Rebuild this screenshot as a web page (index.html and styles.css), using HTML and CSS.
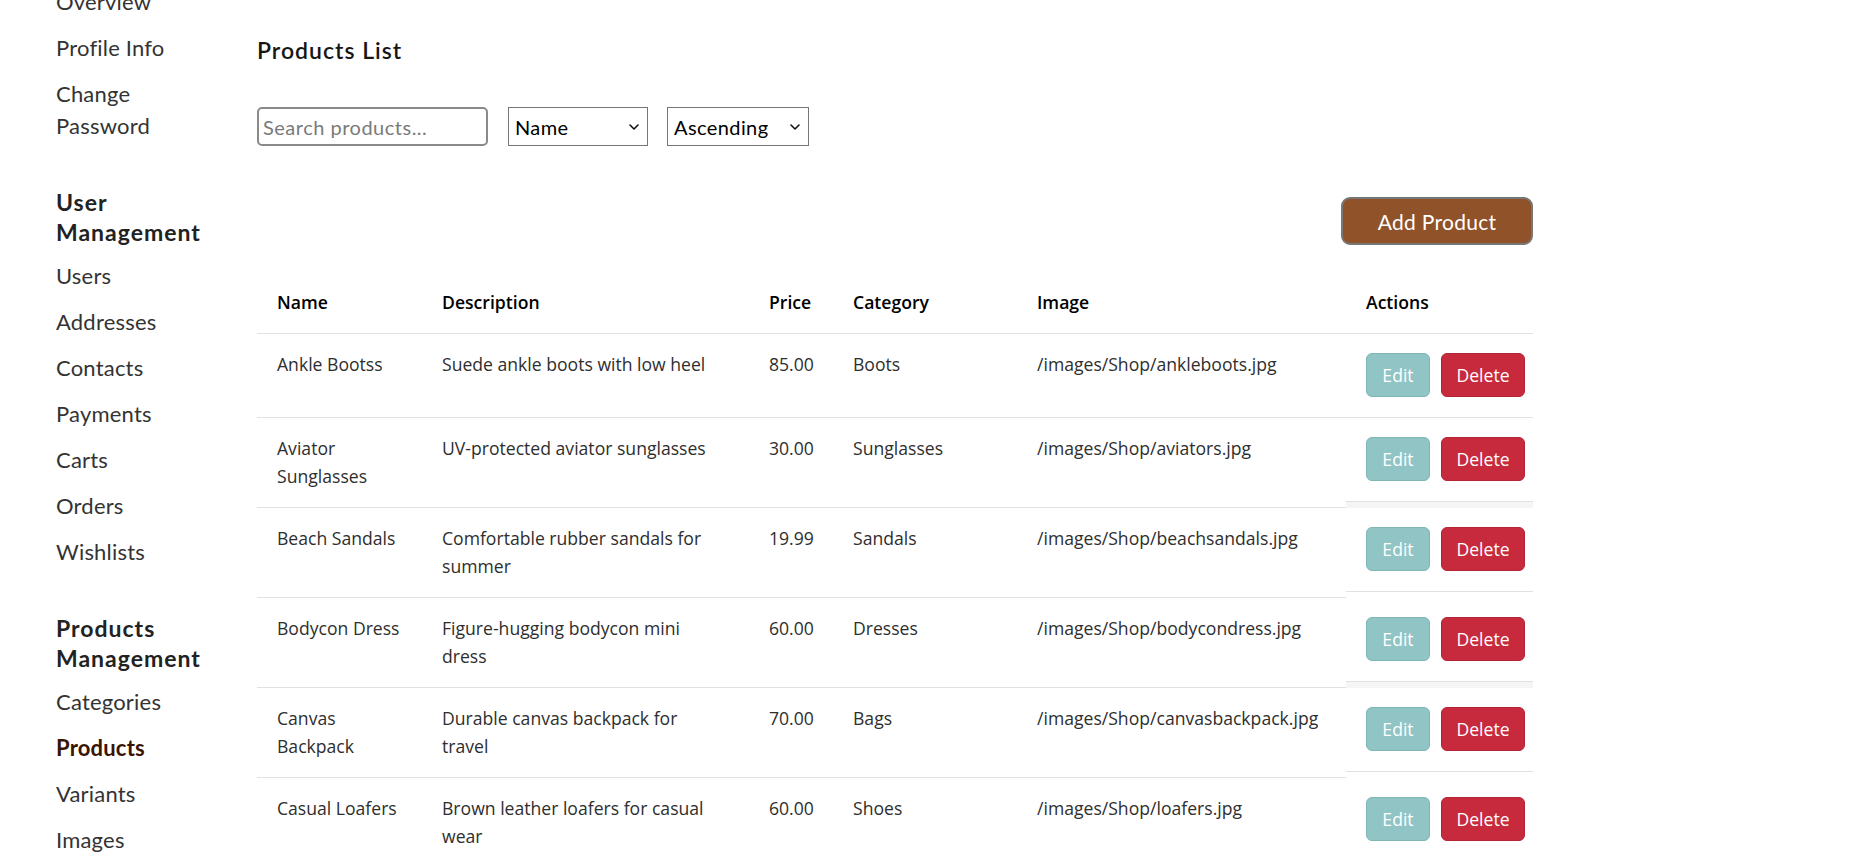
FILE: index.html
```html
<!DOCTYPE html>
<html lang="en">
<head>
<meta charset="utf-8">
<title>Products List</title>
<link rel="stylesheet" href="styles.css">
</head>
<body>
<div class="layout">
  <aside class="sidebar">
    <nav class="nav-group first">
      <a class="nav-link" href="#">Overview</a>
      <a class="nav-link" href="#">Profile Info</a>
      <a class="nav-link" href="#">Change Password</a>
    </nav>
    <h3 class="nav-heading">User Management</h3>
    <nav class="nav-group">
      <a class="nav-link" href="#">Users</a>
      <a class="nav-link" href="#">Addresses</a>
      <a class="nav-link" href="#">Contacts</a>
      <a class="nav-link" href="#">Payments</a>
      <a class="nav-link" href="#">Carts</a>
      <a class="nav-link" href="#">Orders</a>
      <a class="nav-link" href="#">Wishlists</a>
    </nav>
    <h3 class="nav-heading">Products Management</h3>
    <nav class="nav-group">
      <a class="nav-link" href="#">Categories</a>
      <a class="nav-link active" href="#">Products</a>
      <a class="nav-link" href="#">Variants</a>
      <a class="nav-link" href="#">Images</a>
    </nav>
  </aside>

  <main class="main">
    <h2 class="page-title">Products List</h2>

    <div class="filters">
      <input class="search" type="text" placeholder="Search products...">
      <div class="select-wrap name-select">
        <select class="select"><option>Name</option><option>Price</option></select>
        <svg class="chevron" viewBox="0 0 10 6" width="10" height="6"><path d="M1 1l4 4 4-4" fill="none" stroke="#111" stroke-width="1.6" stroke-linecap="round" stroke-linejoin="round"/></svg>
      </div>
      <div class="select-wrap order-select">
        <select class="select"><option>Ascending</option><option>Descending</option></select>
        <svg class="chevron" viewBox="0 0 10 6" width="10" height="6"><path d="M1 1l4 4 4-4" fill="none" stroke="#111" stroke-width="1.6" stroke-linecap="round" stroke-linejoin="round"/></svg>
      </div>
    </div>

    <div class="toolbar">
      <button class="btn-add" type="button">Add Product</button>
    </div>

    <table class="products">
      <colgroup>
        <col class="c-name"><col class="c-desc"><col class="c-price"><col class="c-cat"><col class="c-img"><col class="c-act">
      </colgroup>
      <thead>
        <tr>
          <th>Name</th><th>Description</th><th>Price</th><th>Category</th><th>Image</th><th class="th-act">Actions</th>
        </tr>
      </thead>
      <tbody>
        <tr>
          <td>Ankle Bootss</td><td class="td-desc">Suede ankle boots with low heel</td><td>85.00</td><td>Boots</td><td>/images/Shop/ankleboots.jpg</td>
          <td class="td-act"><div class="actions"><button class="btn-edit">Edit</button><button class="btn-del">Delete</button></div></td>
        </tr>
        <tr class="band">
          <td>Aviator Sunglasses</td><td class="td-desc">UV-protected aviator sunglasses</td><td>30.00</td><td>Sunglasses</td><td>/images/Shop/aviators.jpg</td>
          <td class="td-act"><div class="actions"><button class="btn-edit">Edit</button><button class="btn-del">Delete</button></div></td>
        </tr>
        <tr>
          <td>Beach Sandals</td><td class="td-desc">Comfortable rubber sandals for summer</td><td>19.99</td><td>Sandals</td><td>/images/Shop/beachsandals.jpg</td>
          <td class="td-act"><div class="actions"><button class="btn-edit">Edit</button><button class="btn-del">Delete</button></div></td>
        </tr>
        <tr class="band">
          <td>Bodycon Dress</td><td class="td-desc">Figure-hugging bodycon mini dress</td><td>60.00</td><td>Dresses</td><td>/images/Shop/bodycondress.jpg</td>
          <td class="td-act"><div class="actions"><button class="btn-edit">Edit</button><button class="btn-del">Delete</button></div></td>
        </tr>
        <tr>
          <td>Canvas Backpack</td><td class="td-desc">Durable canvas backpack for travel</td><td>70.00</td><td>Bags</td><td>/images/Shop/canvasbackpack.jpg</td>
          <td class="td-act"><div class="actions"><button class="btn-edit">Edit</button><button class="btn-del">Delete</button></div></td>
        </tr>
        <tr class="band">
          <td>Casual Loafers</td><td class="td-desc">Brown leather loafers for casual wear</td><td>60.00</td><td>Shoes</td><td>/images/Shop/loafers.jpg</td>
          <td class="td-act"><div class="actions"><button class="btn-edit">Edit</button><button class="btn-del">Delete</button></div></td>
        </tr>
      </tbody>
    </table>
  </main>
</div>
</body>
</html>
```

FILE: styles.css
```css
* { box-sizing: border-box; }

html, body {
  margin: 0;
  padding: 0;
  background: #fff;
  overflow: hidden;
}

body {
  font-family: "Lato", "Noto Sans", sans-serif;
  color: #333;
}

.layout {
  display: flex;
  align-items: flex-start;
  gap: 41px;
  padding-left: 56px;
}

/* ---------- sidebar ---------- */
.sidebar {
  width: 160px;
  flex: 0 0 160px;
  margin-top: -21px;
}

.nav-group {
  display: flex;
  flex-direction: column;
}

.nav-link {
  display: block;
  padding: 7px 0;
  font-size: 22px;
  line-height: 32px;
  color: #333;
  text-decoration: none;
  letter-spacing: 0.2px;
}

.nav-link.active {
  font-weight: 700;
  color: #3a1400;
}

.nav-heading {
  margin: 38px 0 6px;
  font-size: 23px;
  line-height: 30px;
  font-weight: 700;
  color: #222;
  letter-spacing: 1px;
}

/* ---------- main ---------- */
.main {
  width: 1276px;
  flex: 0 0 1276px;
  padding-top: 35px;
  display: flex;
  flex-direction: column;
}

.page-title {
  margin: 0;
  font-size: 23px;
  line-height: 30px;
  font-weight: 600;
  color: #161616;
  letter-spacing: 1px;
}

.filters {
  display: flex;
  align-items: center;
  gap: 20px;
  margin-top: 42px;
}

.search {
  width: 231px;
  height: 39px;
  border: 2px solid #8a8a8a;
  border-radius: 5px;
  padding: 0 4px;
  font-family: "Lato", sans-serif;
  font-size: 20px;
  letter-spacing: 0.5px;
  color: #222;
  outline: none;
}

.search::placeholder { color: #7a7a7a; }

.select-wrap {
  position: relative;
  height: 39px;
}

.name-select { width: 140px; }
.order-select { width: 142px; margin-left: -1px; }

.select {
  appearance: none;
  -webkit-appearance: none;
  width: 100%;
  height: 39px;
  border: 1px solid #767676;
  border-radius: 0;
  background: #fff;
  padding: 0 24px 0 6px;
  font-family: "Lato", sans-serif;
  font-size: 20px;
  letter-spacing: 0.4px;
  color: #000;
}

.chevron {
  position: absolute;
  right: 9px;
  top: 17px;
  pointer-events: none;
}

.toolbar {
  display: flex;
  justify-content: flex-end;
  margin-top: 51px;
}

.btn-add {
  width: 192px;
  height: 48px;
  border: 2px solid #777;
  border-radius: 9px;
  background: #8f5229;
  color: #fff;
  font-family: "Lato", sans-serif;
  font-size: 21px;
  letter-spacing: 0.3px;
  cursor: pointer;
}

/* ---------- table ---------- */
.products {
  margin-top: 24px;
  width: 1276px;
  table-layout: fixed;
  border-collapse: separate;
  border-spacing: 0;
  font-family: "Open Sans", "Liberation Sans", sans-serif;
  font-size: 17.6px;
  line-height: 28px;
}

.c-name { width: 165px; }
.c-desc { width: 327px; }
.c-price { width: 84px; }
.c-cat { width: 184px; }
.c-img { width: 329px; }
.c-act { width: 187px; }

.products th {
  text-align: left;
  font-weight: 600;
  color: #000;
  padding: 19px 12px 17px 20px;
  border-bottom: 1px solid #dee2e6;
  white-space: nowrap;
}

.products td {
  vertical-align: top;
  padding: 16px 12px 17px 20px;
  color: #2e2e2e;
  border-bottom: 1px solid #dee2e6;
}

.products td.td-desc {
  padding-right: 31px;
}

.products td.td-act {
  padding: 0;
  border-bottom: none;
  background: #fff;
}

.products tr.band td.td-act { background: #f5f5f5; }

.actions {
  display: flex;
  gap: 11px;
  height: 84px;
  padding: 19px 8px 20px 20px;
  border-bottom: 1px solid #dee2e6;
  background: #fff;
}

.btn-edit,
.btn-del {
  height: 44px;
  border-radius: 6px;
  color: #fff;
  font-family: "Open Sans", "Liberation Sans", sans-serif;
  font-size: 17.6px;
  padding: 0;
  cursor: pointer;
}

.btn-edit {
  width: 64px;
  background: #91c4c4;
  border: 1px solid #7fb6b6;
}

.btn-del {
  width: 84px;
  background: #c82a3d;
  border: 1px solid #b42335;
}
```
